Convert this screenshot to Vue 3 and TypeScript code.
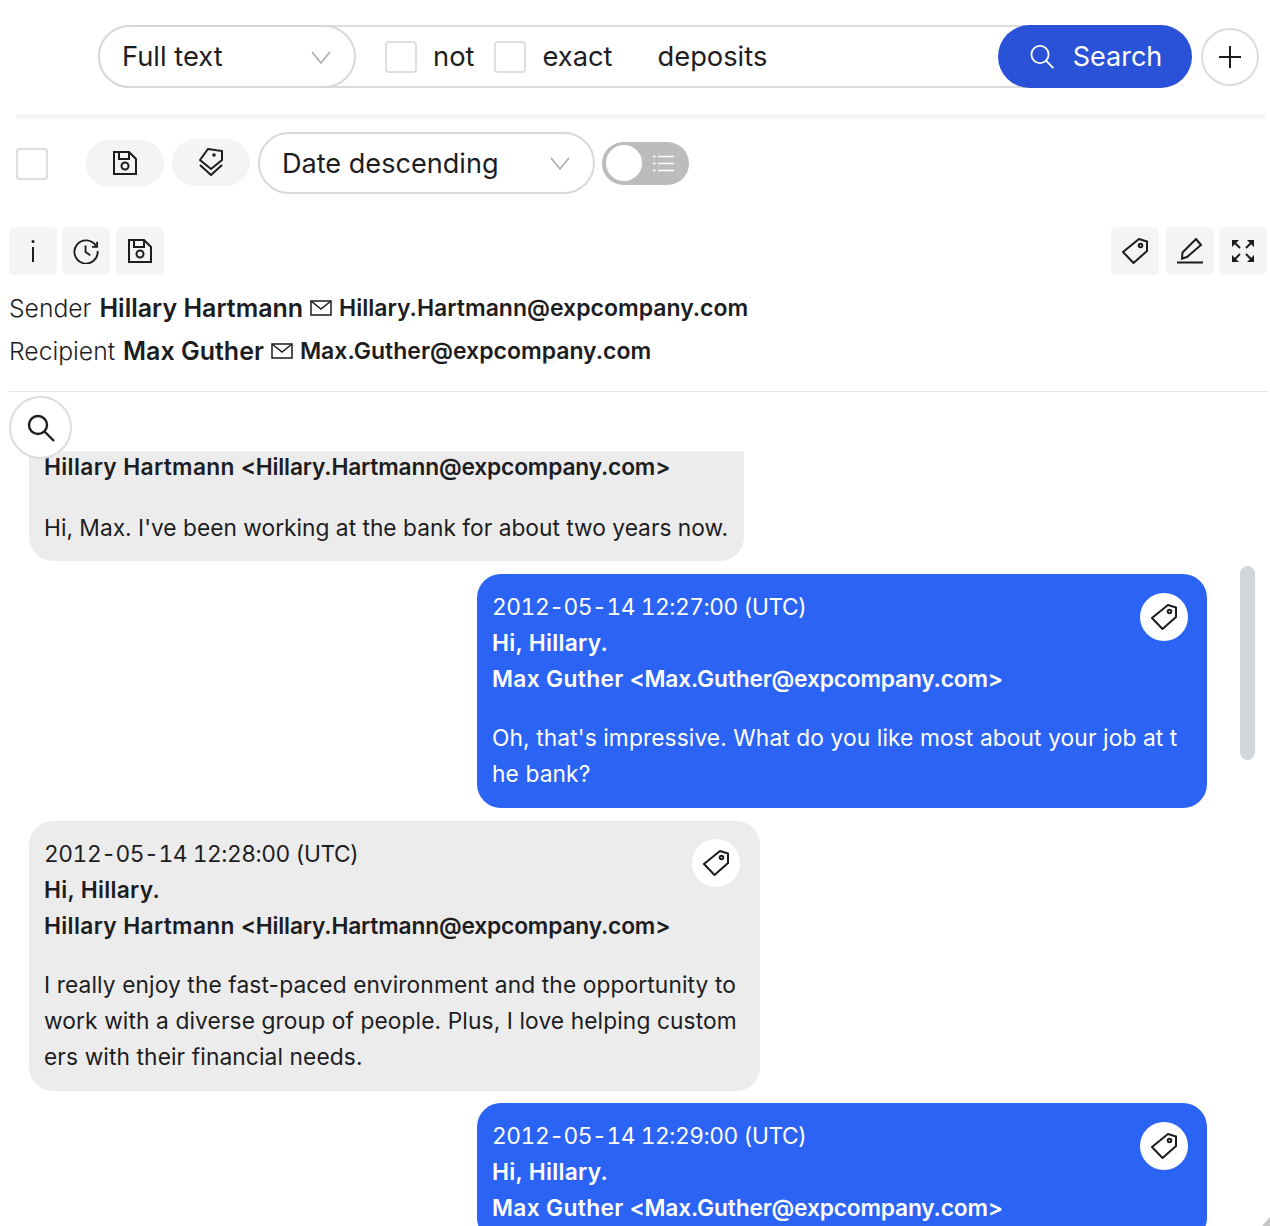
<script setup lang="ts">
interface Msg { time?: string; greet?: string; name: string; addr: string; body: string; mine: boolean; tag: boolean; clipped?: boolean }
const hillary = { name: 'Hillary Hartmann', addr: '<Hillary.Hartmann@expcompany.com>' }
const max = { name: 'Max Guther', addr: '<Max.Guther@expcompany.com>' }
const messages: Msg[] = [
  { ...hillary, body: "Hi, Max. I've been working at the bank for about two years now.", mine: false, tag: false, clipped: true },
  { time: '2012-05-14 12:27:00 (UTC)', greet: 'Hi, Hillary.', ...max, body: "Oh, that's impressive. What do you like most about your job at the bank?", mine: true, tag: true },
  { time: '2012-05-14 12:28:00 (UTC)', greet: 'Hi, Hillary.', ...hillary, body: 'I really enjoy the fast-paced environment and the opportunity to work with a diverse group of people. Plus, I love helping customers with their financial needs.', mine: false, tag: true },
  { time: '2012-05-14 12:29:00 (UTC)', greet: 'Hi, Hillary.', ...max, body: '', mine: true, tag: true },
]
</script>

<template>
  <div class="page">
    <div class="search-row">
      <div class="search-bar">
        <div class="select field-select"><span>Full text</span>
          <svg class="chev" viewBox="0 0 22 14"><path d="M2 2l9 11 9-11" /></svg>
        </div>
        <span class="check first"></span><span class="lbl">not</span>
        <span class="check second"></span><span class="lbl">exact</span>
        <span class="query">deposits</span>
        <button class="search-btn">
          <svg viewBox="0 0 28 28" class="s-icon"><circle cx="12" cy="11.5" r="8.6" /><path d="M18.3 17.8l7 7.4" /></svg>
          <span>Search</span>
        </button>
      </div>
      <button class="plus"><svg viewBox="0 0 24 24"><path d="M12 1v22M1 12h22" /></svg></button>
    </div>
    <div class="rule"></div>
    <div class="tools">
      <span class="check tool-check"></span>
      <button class="pill-btn">
        <svg viewBox="0 0 26 26" class="ico"><path d="M2 2h15l7 7v15H2z" /><path d="M7 2v7h10V2" /><circle cx="13" cy="16" r="3.5" /></svg>
      </button>
      <button class="pill-btn tags">
        <svg viewBox="0 0 24 28" class="ico-tags"><path d="M9 1l14 2v9L12 21 1 12z" /><path d="M1 17l11 10 11-10" /><circle cx="15" cy="7" r=".8" /></svg>
      </button>
      <div class="select sort-select"><span>Date descending</span>
        <svg class="chev" viewBox="0 0 22 14"><path d="M2 2l9 11 9-11" /></svg>
      </div>
      <div class="toggle"><span class="knob"></span>
        <svg viewBox="0 0 21 17" class="list"><path d="M5 1.500h16M5 8.500h16M5 15.500h16M0 1.500h2.500M0 8.500h2.500M0 15.500h2.500" /></svg>
      </div>
    </div>
    <div class="icon-row">
      <div class="group left">
        <button class="sq"><svg viewBox="0 0 24 24" class="sq-i"><circle cx="12" cy="2.500" r="1.500" class="solid" /><path d="M12 8V23" /></svg></button>
        <button class="sq"><svg viewBox="0 0 28 28" class="sq-i big"><path d="M25 9A12.500 12.500 0 1 0 26.500 14" /><path d="M26 4v5.500h-5.500" /><path d="M13.500 8v7l5 3.500" /></svg></button>
        <button class="sq"><svg viewBox="0 0 26 26" class="sq-i big"><path d="M2 2h15l7 7v15H2z" /><path d="M7 2v7h10V2" /><circle cx="13" cy="16" r="3.500" /></svg></button>
      </div>
      <div class="group right">
        <button class="sq"><svg viewBox="0 0 26 26" class="sq-i tag-i"><path d="M17 1l8 2.500V13L11.500 25 1 14z" /><circle cx="18.500" cy="7.500" r="1.800" /></svg></button>
        <button class="sq"><svg viewBox="0 0 26 26" class="sq-i tag-i"><path d="M19 1l5 6L10 19l-5 1.500.5-6z" /><path d="M0 24.500h26" /></svg></button>
        <button class="sq"><svg viewBox="0 0 22 22" class="sq-i exp"><path class="solid" d="M0 0h7L0 7zM22 0v7L15 0zM0 22v-7l7 7zM22 22h-7l7-7z" /><path d="M2 2l6 6M20 2l-6 6M2 20l6-6M20 20l-6-6" /></svg></button>
      </div>
    </div>
    <div class="meta">
      <div class="who"><span>Sender</span><b class="name">Hillary Hartmann</b>
        <svg viewBox="0 0 22 16" class="mail"><path d="M1 1h20v14H1z" /><path d="M1 1l10 8 10-8" /></svg>
        <b class="addr">Hillary.Hartmann@expcompany.com</b></div>
      <div class="who"><span>Recipient</span><b class="name">Max Guther</b>
        <svg viewBox="0 0 22 16" class="mail"><path d="M1 1h20v14H1z" /><path d="M1 1l10 8 10-8" /></svg>
        <b class="addr">Max.Guther@expcompany.com</b></div>
    </div>
    <div class="meta-rule"></div>
    <div class="chat-wrap">
      <button class="find"><svg viewBox="0 0 28 28"><circle cx="11" cy="11" r="9" /><path d="M17.500 17.500L27 27" /></svg></button>
      <div class="bar"></div>
      <div class="chat">
        <div v-for="(m, i) in messages" :key="i" class="row" :class="{ right: m.mine }">
          <div class="bubble" :class="{ mine: m.mine, clipped: m.clipped }">
            <button v-if="m.tag" class="tag"><svg viewBox="0 0 26 26"><path d="M17 1l8 2.500V13L11.500 25 1 14z" /><circle cx="18.500" cy="7.500" r="1.800" /></svg></button>
            <div v-if="m.time" class="line time">{{ m.time }}</div>
            <div v-if="m.greet" class="line strong greet">{{ m.greet }}</div>
            <div class="line strong"><span class="from-name">{{ m.name }}</span> <span class="from-addr">{{ m.addr }}</span></div>
            <div v-if="m.body" class="body">{{ m.body }}</div>
          </div>
        </div>
      </div>
      <svg class="grip" viewBox="0 0 10 12"><path d="M10 0v12H0z" /></svg>
    </div>
  </div>
</template>

<style>
html, body { margin: 0; background: #fff; }
</style>

<style scoped>
.page { width: 1270px; height: 1226px; overflow: hidden; position: relative; font-family: Inter, "Liberation Sans", sans-serif; color: #1d1d1f; box-sizing: border-box; }
button { border: none; padding: 0; font: inherit; cursor: pointer; display: flex; align-items: center; justify-content: center; }
svg { fill: none; stroke: #1d1d1f; stroke-width: 2; display: block; }

.search-row { display: flex; align-items: center; padding: 25px 0 0 98px; gap: 9px; }
.search-bar { width: 1094px; height: 63px; box-sizing: border-box; border: 2px solid #dcdcdc; border-radius: 32px; display: flex; align-items: center; position: relative; font-size: 27.3px; }
.select { display: flex; align-items: center; justify-content: space-between; box-sizing: border-box; background: #fff; border: 2px solid #d9d9d9; border-radius: 32px; font-size: 27.3px; }
.field-select { width: 258px; height: 63px; margin: 0 0 0 -2px; padding: 0 22px 0 22px; }
.chev { width: 22px; height: 14px; stroke: #a9a9a9; stroke-width: 1.500; }
.check { display: block; width: 32px; height: 32px; box-sizing: border-box; border: 2px solid #dedede; border-radius: 4px; background: #fff; flex: none; }
.check.first { margin-left: 29px; }
.check.second { margin-left: 20px; }
.lbl { margin-left: 16px; }
.query { margin-left: 45px; }
.search-btn { position: absolute; right: -2px; top: -2px; width: 194px; height: 63px; border-radius: 32px; background: #2a52d9; color: #fff; font-size: 27px; gap: 17px; }
.s-icon { width: 28px; height: 28px; stroke: #fff; stroke-width: 1.800; }
.plus { width: 58px; height: 58px; border-radius: 50%; background: #fff; border: 2px solid #dcdcdc; box-sizing: border-box; }
.plus svg { width: 24px; height: 24px; }

.rule { margin: 26px 5px 0 16px; height: 5px; background: #f6f6f6; }

.tools { display: flex; align-items: center; height: 62px; margin-top: 13px; padding-left: 16px; }
.tool-check { margin: 2px 38px 0 0; }
.pill-btn { width: 78px; height: 47px; border-radius: 24px; background: #f4f4f4; margin-right: 8px; }
.pill-btn.tags { transform: translateY(-1px); }
.ico { width: 26px; height: 26px; }
.ico-tags { width: 24px; height: 28px; }
.sort-select { width: 337px; height: 62px; padding: 0 22px 0 22px; font-size: 27.1px; }
.toggle { width: 87px; height: 43px; margin-left: 7px; border-radius: 22px; background: #bcbcbc; display: flex; align-items: center; justify-content: space-between; padding: 0 15px 0 4px; box-sizing: border-box; }
.knob { width: 36px; height: 36px; border-radius: 50%; background: #fff; display: block; }
.list { width: 21px; height: 17px; stroke: #fff; stroke-width: 1.500; }

.icon-row { display: flex; justify-content: space-between; padding: 0 3px 0 9px; margin-top: 33px; }
.group { display: flex; gap: 5px; }
.group.left .sq:last-child { margin-left: 1px; }
.group.right .sq:nth-child(2) { margin-left: 2px; }
.sq { width: 48px; height: 48px; border-radius: 6px; background: #f4f4f4; }
.sq-i { width: 24px; height: 24px; }
.sq-i.big { width: 26px; height: 26px; }
.sq-i.tag-i { width: 26px; height: 26px; }
.sq-i.exp { width: 22px; height: 22px; }
.solid { fill: #1d1d1f; stroke: none; }

.meta { padding: 11px 0 0 9px; }
.who { display: flex; align-items: center; height: 43px; }
.who span { font-weight: 300; margin-right: 8px; font-size: 24.7px; }
.name { font-weight: 600; font-size: 25px; }
.addr { font-weight: 600; font-size: 23px; }
.mail { width: 22px; height: 16px; margin: 0 7px; stroke-width: 1.500; }
.meta-rule { margin: 19px 2px 0 9px; height: 1px; background: #e7e7e7; }

.chat-wrap { position: relative; height: 835px; }
.find { position: absolute; left: 9px; top: 4px; width: 63px; height: 63px; border-radius: 50%; background: #fff; border: 2px solid #dcdcdc; box-sizing: border-box; z-index: 2; }
.find svg { width: 28px; height: 28px; stroke-width: 2.400; }
.bar { position: absolute; left: 1240px; top: 174px; width: 15px; height: 194px; border-radius: 8px; background: #d2d8da; }
.grip { position: absolute; right: 0; bottom: 0; width: 8px; height: 11px; fill: #c8c8c8; stroke: none; }
.chat { position: absolute; left: 29px; top: 59px; width: 1178px; display: flex; flex-direction: column; gap: 13px; font-size: 22.75px; line-height: 36px; }
.row { display: flex; }
.row.right { justify-content: flex-end; }
.row:last-child { margin-top: -1px; }
.bubble { position: relative; max-width: 731px; box-sizing: border-box; padding: 15px 20px 16px 15px; background: #ececec; border-radius: 24px; word-break: break-all; }
.bubble.clipped { padding: 0 16px 15px 15px; border-radius: 0 0 24px 24px; }
.bubble.clipped .line { margin-top: -2px; }
.bubble.clipped .body { margin-top: 25px; letter-spacing: 0; }
.bubble.mine { background: #2b64f5; color: #fff; width: 730px; }
.line { min-height: 36px; }
.time { font-variant-numeric: tabular-nums; letter-spacing: -0.45px; }
.strong { font-weight: 600; }
.greet { letter-spacing: 0.3px; }
.from-name { letter-spacing: 0.35px; }
.from-addr { letter-spacing: -0.17px; }
.body { margin-top: 23px; letter-spacing: 0.1px; }
.tag { position: absolute; right: 20px; top: 18px; width: 48px; height: 48px; border-radius: 50%; background: #fff; }
.bubble.mine .tag { right: 19px; top: 19px; }
.tag svg { width: 26px; height: 26px; }
</style>
